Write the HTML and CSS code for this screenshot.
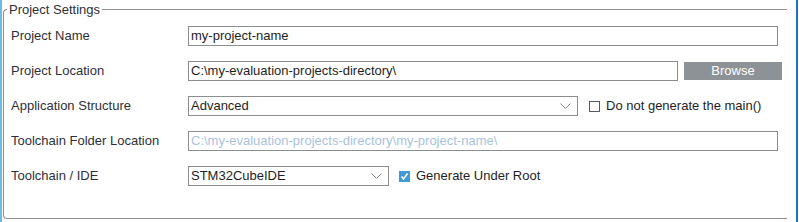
FILE: index.html
```html
<!DOCTYPE html>
<html>
<head>
<meta charset="utf-8">
<link rel="stylesheet" href="styles.css">
</head>
<body>
<div class="frame">
  <fieldset class="group">
    <legend class="group-title">Project Settings</legend>
    <div class="rows">
      <div class="row">
        <div class="label">Project Name</div>
        <div class="field w-full">my-project-name</div>
      </div>
      <div class="row">
        <div class="label">Project Location</div>
        <div class="field w-loc">C:\my-evaluation-projects-directory\</div>
        <div class="btn">Browse</div>
      </div>
      <div class="row">
        <div class="label">Application Structure</div>
        <div class="field select w-struct">
          <span>Advanced</span>
          <svg class="chev" width="11" height="6" viewBox="0 0 11 6"><polyline points="0.5,0.5 5.5,5.5 10.5,0.5" fill="none" stroke="#8a8e91" stroke-width="1"/></svg>
        </div>
        <div class="check check-struct">
          <span class="box"></span>
          <span class="check-text">Do not generate the main()</span>
        </div>
      </div>
      <div class="row">
        <div class="label">Toolchain Folder Location</div>
        <div class="field w-full disabled">C:\my-evaluation-projects-directory\my-project-name\</div>
      </div>
      <div class="row">
        <div class="label">Toolchain / IDE</div>
        <div class="field select w-ide">
          <span>STM32CubeIDE</span>
          <svg class="chev" width="11" height="6" viewBox="0 0 11 6"><polyline points="0.5,0.5 5.5,5.5 10.5,0.5" fill="none" stroke="#8a8e91" stroke-width="1"/></svg>
        </div>
        <div class="check check-ide">
          <span class="box checked"><svg width="11" height="11" viewBox="0 0 11 11"><polyline points="2.5,5.5 4.5,8 8.5,2.5" fill="none" stroke="#fff" stroke-width="1.6"/></svg></span>
          <span class="check-text">Generate Under Root</span>
        </div>
      </div>
    </div>
  </fieldset>
</div>
</body>
</html>
```
FILE: styles.css
```css
html, body {
  margin: 0;
  padding: 0;
  background: #ffffff;
}
body {
  width: 799px;
  height: 222px;
  overflow: hidden;
  font-family: "Liberation Sans", Arial, sans-serif;
  font-size: 13px;
  color: #2e3038;
}
.frame {
  box-sizing: border-box;
  width: 798px;
  height: 222px;
  border-left: 2px solid #6cbbe6;
  border-right: 2px solid #2170c4;
  padding: 2px 0 0 1px;
}
.group {
  box-sizing: border-box;
  width: 784px;
  height: 217px;
  margin: 0;
  padding: 9px 0 0 7px;
  border: 1px solid #8e8e8e;
  border-right: none;
  border-radius: 4px 0 0 4px;
}
.group-title {
  margin-left: -4px;
  padding: 0 2px;
  line-height: 15px;
  color: #2e3038;
}
.rows {
  display: flex;
  flex-direction: column;
  gap: 15px;
}
.row {
  display: flex;
  align-items: center;
  height: 20px;
}
.label {
  width: 177px;
  flex: none;
  line-height: 20px;
}
.field {
  box-sizing: border-box;
  height: 20px;
  border: 1px solid #8a8e91;
  padding: 0 2px;
  line-height: 18px;
  color: #1e1e24;
  white-space: nowrap;
  overflow: hidden;
  flex: none;
}
.w-full { width: 590px; }
.w-loc { width: 490px; }
.w-struct { width: 390px; }
.w-ide { width: 201px; }
.disabled { color: #a9c3df; }
.select {
  display: flex;
  align-items: center;
  justify-content: space-between;
  padding-right: 6px;
}
.chev { display: block; flex: none; }
.btn {
  box-sizing: border-box;
  width: 98px;
  height: 18px;
  margin-left: 6px;
  background: #8d9296;
  color: #ffffff;
  text-align: center;
  line-height: 18px;
  flex: none;
}
.check {
  display: flex;
  align-items: center;
  flex: none;
}
.check-struct { margin-left: 11px; }
.check-ide { margin-left: 10px; }
.box {
  box-sizing: border-box;
  width: 11px;
  height: 11px;
  border: 1px solid #555a60;
  background: #fff;
  margin-right: 6px;
  display: block;
}
.box.checked {
  border: none;
  background: #3d9bd8;
}
.box svg { display: block; }
.check-text {
  line-height: 20px;
  color: #1e1e24;
}
```
